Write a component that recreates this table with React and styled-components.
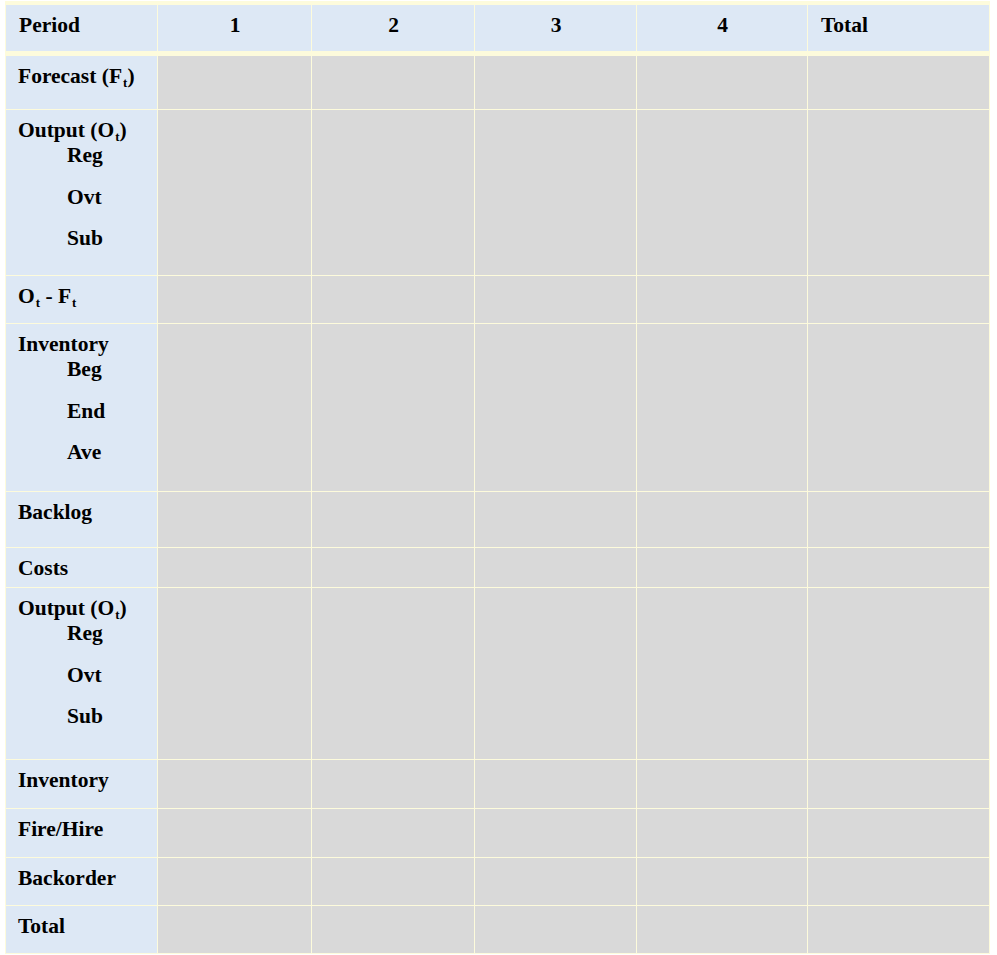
import React from "react";
import styled, { createGlobalStyle } from "styled-components";

const GlobalStyle = createGlobalStyle`
  html, body {
    margin: 0;
    padding: 0;
    background-color: #ffffff;
  }
`;

const columns = ["1", "2", "3", "4"];

const rows = [
  { key: "forecast", label: <>Forecast (F<Sub>t</Sub>)</>, height: 53 },
  {
    key: "output",
    label: <>Output (O<Sub>t</Sub>)</>,
    items: ["Reg", "Ovt", "Sub"],
    height: 165,
  },
  {
    key: "diff",
    label: (
      <>
        O<Sub>t</Sub> - F<Sub>t</Sub>
      </>
    ),
    height: 47,
  },
  {
    key: "inventory",
    label: "Inventory",
    items: ["Beg", "End", "Ave"],
    height: 167,
  },
  { key: "backlog", label: "Backlog", height: 55 },
  { key: "costs", label: "Costs", height: 39 },
  {
    key: "output-cost",
    label: <>Output (O<Sub>t</Sub>)</>,
    items: ["Reg", "Ovt", "Sub"],
    height: 171,
  },
  { key: "inventory-cost", label: "Inventory", height: 48 },
  { key: "fire", label: "Fire/Hire", height: 48 },
  { key: "backorder", label: "Backorder", height: 47 },
  { key: "total", label: "Total", height: 47 },
];

function Sub({ children }) {
  return <SubText>{children}</SubText>;
}

const App = () => {
  return (
    <>
      <GlobalStyle />
      <Page>
        <Grid>
          <HeadCell>Period</HeadCell>
          {columns.map(col => (
            <HeadCell key={col} $center>
              {col}
            </HeadCell>
          ))}
          <HeadCell>Total</HeadCell>

          {rows.map(row => (
            <React.Fragment key={row.key}>
              <LabelCell $h={row.height}>
                <Line>{row.label}</Line>
                {row.items &&
                  row.items.map(item => <SubLine key={item}>{item}</SubLine>)}
              </LabelCell>
              {[0, 1, 2, 3, 4].map(i => (
                <DataCell key={i} />
              ))}
            </React.Fragment>
          ))}
        </Grid>
      </Page>
    </>
  );
};

const Page = styled.div`
  padding: 1px 0 0 5px;
  font-family: "Liberation Serif", "Times New Roman", serif;
  font-weight: 700;
  font-size: 21.5px;
  line-height: 25px;
  color: #000000;
`;

const Grid = styled.div`
  display: grid;
  grid-template-columns: 151px 153px 162px 161px 170px 181px;
  gap: 1px;
  width: fit-content;
  padding: 4px 1px 1px 1px;
  background-color: #fdfbdc;
`;

const HeadCell = styled.div`
  height: 50px;
  box-sizing: border-box;
  padding: 8px 12px 0 13px;
  background-color: #dde8f5;
  border-bottom: 4px solid #fdfbdc;
  text-align: ${({ $center }) => ($center ? "center" : "left")};
`;

const LabelCell = styled.div`
  height: ${({ $h }) => $h}px;
  box-sizing: border-box;
  padding: 8px 8px 0 12px;
  background-color: #dde8f5;
`;

const DataCell = styled.div`
  background-color: #d9d9d9;
`;

const Line = styled.div`
  white-space: nowrap;
`;

const SubLine = styled.div`
  padding-left: 49px;
  & + & {
    margin-top: 16.5px;
  }
`;

const SubText = styled.span`
  font-size: 0.6em;
  line-height: 0;
  position: relative;
  top: 0.32em;
  margin-left: 1px;
`;

export default App;
